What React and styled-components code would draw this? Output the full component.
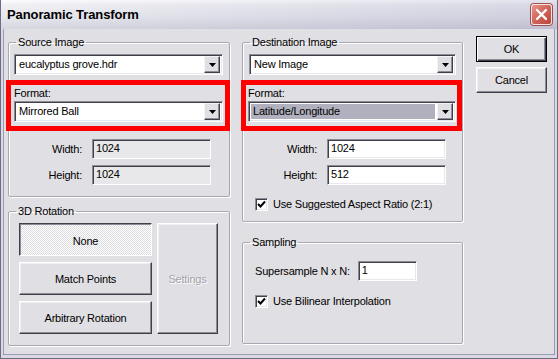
import React from 'react';
import styled, { createGlobalStyle, css } from 'styled-components';

const Global = createGlobalStyle`
  html, body { margin: 0; padding: 0; background: #e0dfe3; }
  body { font-family: "Liberation Sans", Arial, sans-serif; font-size: 11px; letter-spacing: -0.2px; color: #000; }
  * { box-sizing: border-box; }
`;

const Window = styled.div`
  width: 558px;
  height: 359px;
  overflow: hidden;
  display: flex;
  flex-direction: column;
  background: #d9d9e4;
  border: 1px solid #6c6c84;
  border-top: none;
`;

const TitleBar = styled.div`
  height: 29px;
  flex: none;
  display: flex;
  align-items: center;
  justify-content: space-between;
  padding: 0 5px 0 6px;
  background:
    linear-gradient(to right, rgba(255,255,255,0.25), rgba(150,150,185,0.22)),
    linear-gradient(to bottom, #fbfbfd 0%, #eaeaf0 18%, #dedee7 60%, #c9c9d7 100%);
`;

const Title = styled.span`
  font-weight: bold;
  font-size: 13px;
  letter-spacing: -0.1px;
  color: #000;
`;

const CloseButton = styled.div`
  width: 21px;
  height: 21px;
  border-radius: 3px;
  border: 1px solid #f4e4e4;
  background: linear-gradient(135deg, #e8948a 0%, #d0645a 50%, #b8443a 100%);
  display: flex;
  align-items: center;
  justify-content: center;
  box-shadow: 0 0 0 1px #a05050;
`;

const Client = styled.div`
  flex: 1;
  margin: 0 2px 3px;
  border: 1px solid #9a9ab2;
  border-top: none;
  background: #e0dfe3;
  display: flex;
  align-items: flex-start;
  padding: 7px 0 0 4px;
`;

const Column = styled.div`
  display: flex;
  flex-direction: column;
  width: ${p => p.$w}px;
  margin-right: ${p => p.$mr || 0}px;
  gap: ${p => p.$gap}px;
`;

const Group = styled.fieldset`
  margin: 0;
  padding: 0;
  border: 1px solid #a8a8b4;
  border-radius: 2px;
  box-shadow: inset 1px 1px 0 #fff, 1px 1px 0 #fff;
  min-width: 0;
`;

const Legend = styled.legend`
  margin-left: 7px;
  padding: 0 2px;
  line-height: 12px;
  font-size: 11px;
`;

const GroupBody = styled.div`
  display: flex;
  flex-direction: column;
  padding: ${p => p.$pad};
`;

const sunken = css`
  border: 1px solid;
  border-color: #8c8c98 #ffffff #ffffff #8c8c98;
  box-shadow: inset 1px 1px 0 #404048, inset -1px -1px 0 #e8e8ec;
`;

const Combo = styled.div`
  ${sunken};
  height: 21px;
  background: #fff;
  display: flex;
  align-items: center;
  padding: 2px;
`;

const ComboText = styled.div`
  flex: 1;
  height: 15px;
  line-height: 15px;
  padding-left: 2px;
  margin-right: 2px;
  background: ${p => (p.$selected ? '#b0b0be' : 'transparent')};
  white-space: nowrap;
  overflow: hidden;
`;

const DropButton = styled.div`
  width: 16px;
  height: 17px;
  flex: none;
  background: #e0dfe3;
  border: 1px solid;
  border-color: #f4f4f6 #404048 #404048 #f4f4f6;
  box-shadow: inset -1px -1px 0 #8c8c98;
  display: flex;
  align-items: center;
  justify-content: center;
`;

const Highlight = styled.div`
  border: 5px solid #ff0000;
  margin: 5px ${p => p.$mr}px 0 ${p => p.$ml}px;
  padding: 0 ${p => p.$pr}px 4px ${p => p.$pl}px;
`;

const FieldLabel = styled.div`
  height: 16px;
  line-height: 16px;
`;

const DimRows = styled.div`
  display: grid;
  grid-template-columns: 68px 119px;
  column-gap: 10px;
  row-gap: 6px;
  align-items: center;
  margin-top: 8px;
`;

const RowLabel = styled.div`
  text-align: right;
  white-space: nowrap;
`;

const TextBox = styled.div`
  ${sunken};
  height: 20px;
  width: ${p => (p.$w ? `${p.$w}px` : 'auto')};
  line-height: 17px;
  padding-left: 3px;
  background: ${p => (p.$disabled ? '#e8e8ea' : '#ffffff')};
`;

const CheckRow = styled.div`
  display: flex;
  align-items: center;
  height: 16px;
  margin-top: ${p => p.$mt}px;
  padding-left: ${p => p.$pl || 0}px;
  gap: 5px;
`;

const CheckBox = styled.div`
  width: 13px;
  height: 13px;
  ${sunken};
  background: #fff;
  display: flex;
  align-items: center;
  justify-content: center;
`;

const InlineRow = styled.div`
  display: flex;
  align-items: center;
  gap: 8px;
`;

const ButtonGrid = styled.div`
  display: grid;
  grid-template-columns: 133px 61px;
  grid-template-rows: 33px 33px 33px;
  column-gap: 5px;
  row-gap: 6px;
`;

const raised = css`
  border: 1px solid;
  border-color: #ffffff #404048 #404048 #ffffff;
  box-shadow: inset -1px -1px 0 #8c8c98, inset 1px 1px 0 #f0f0f2;
`;

const Button = styled.div`
  ${raised};
  background: #e0dfe3;
  display: flex;
  align-items: center;
  justify-content: center;
  height: ${p => (p.$h ? `${p.$h}px` : 'auto')};
  ${p => p.$span && css`grid-row: 1 / span 3; grid-column: 2;`}
  ${p => p.$disabled && css`color: #a4a4ac; text-shadow: 1px 1px 0 #fff;`}
  ${p => p.$pressed && css`
    border-color: #404048 #ffffff #ffffff #404048;
    box-shadow: inset 1px 1px 0 #8c8c98;
    background: repeating-conic-gradient(#ffffff 0 25%, #dcdce0 0 50%) 0 0 / 2px 2px;
    padding-top: 2px;
  `}
  ${p => p.$default && css`
    border: 1px solid #000;
    box-shadow: inset 1px 1px 0 #fff, inset -1px -1px 0 #404048, inset -2px -2px 0 #8c8c98;
  `}
`;

const ButtonCol = styled.div`
  display: flex;
  flex-direction: column;
  gap: 5px;
  width: 71px;
`;

const Arrow = () => (
  <svg width="7" height="4" viewBox="0 0 7 4"><path d="M0 0h7L3.5 4z" fill="#000" /></svg>
);

const Check = () => (
  <svg width="9" height="9" viewBox="0 0 9 9">
    <path d="M1 4l2.5 2.5L8 1.5" stroke="#000" strokeWidth="2" fill="none" />
  </svg>
);

const XIcon = () => (
  <svg width="13" height="13" viewBox="0 0 13 13">
    <path d="M2 2l9 9M11 2l-9 9" stroke="#fff" strokeWidth="2.4" strokeLinecap="round" />
  </svg>
);

const ComboBox = ({ value, selected }) => (
  <Combo>
    <ComboText $selected={selected}>{value}</ComboText>
    <DropButton><Arrow /></DropButton>
  </Combo>
);

export default function App() {
  return (
    <>
      <Global />
      <Window>
        <TitleBar>
          <Title>Panoramic Transform</Title>
          <CloseButton><XIcon /></CloseButton>
        </TitleBar>
        <Client>
          <Column $w={222} $mr={12} $gap={8}>
            <Group>
              <Legend>Source Image</Legend>
              <GroupBody $pad="6px 6px 11px 5px">
                <ComboBox value="eucalyptus grove.hdr" />
                <Highlight $ml={-8} $mr={-7} $pl={3} $pr={2}>
                  <FieldLabel>Format:</FieldLabel>
                  <ComboBox value="Mirrored Ball" />
                </Highlight>
                <DimRows>
                  <RowLabel>Width:</RowLabel>
                  <TextBox $disabled>1024</TextBox>
                  <RowLabel>Height:</RowLabel>
                  <TextBox $disabled>1024</TextBox>
                </DimRows>
              </GroupBody>
            </Group>
            <Group>
              <Legend>3D Rotation</Legend>
              <GroupBody $pad="6px 10px 11px 10px">
                <ButtonGrid>
                  <Button $pressed>None</Button>
                  <Button $span $disabled>Settings</Button>
                  <Button>Match Points</Button>
                  <Button>Arbitrary Rotation</Button>
                </ButtonGrid>
              </GroupBody>
            </Group>
          </Column>
          <Column $w={221} $mr={13} $gap={14}>
            <Group>
              <Legend>Destination Image</Legend>
              <GroupBody $pad="6px 6px 9px 6px">
                <ComboBox value="New Image" />
                <Highlight $ml={-8} $mr={-6} $pl={2} $pr={1}>
                  <FieldLabel>Format:</FieldLabel>
                  <ComboBox value="Latitude/Longitude" selected />
                </Highlight>
                <DimRows>
                  <RowLabel>Width:</RowLabel>
                  <TextBox>1024</TextBox>
                  <RowLabel>Height:</RowLabel>
                  <TextBox>512</TextBox>
                </DimRows>
                <CheckRow $mt={11} $pl={6}>
                  <CheckBox><Check /></CheckBox>
                  <span>Use Suggested Aspect Ratio (2:1)</span>
                </CheckRow>
              </GroupBody>
            </Group>
            <Group>
              <Legend>Sampling</Legend>
              <GroupBody $pad="13px 12px 34px 12px">
                <InlineRow>
                  <span>Supersample N x N:</span>
                  <TextBox $w={59}>1</TextBox>
                </InlineRow>
                <CheckRow $mt={12}>
                  <CheckBox><Check /></CheckBox>
                  <span>Use Bilinear Interpolation</span>
                </CheckRow>
              </GroupBody>
            </Group>
          </Column>
          <ButtonCol>
            <Button $h={26} $default>OK</Button>
            <Button $h={26}>Cancel</Button>
          </ButtonCol>
        </Client>
      </Window>
    </>
  );
}
